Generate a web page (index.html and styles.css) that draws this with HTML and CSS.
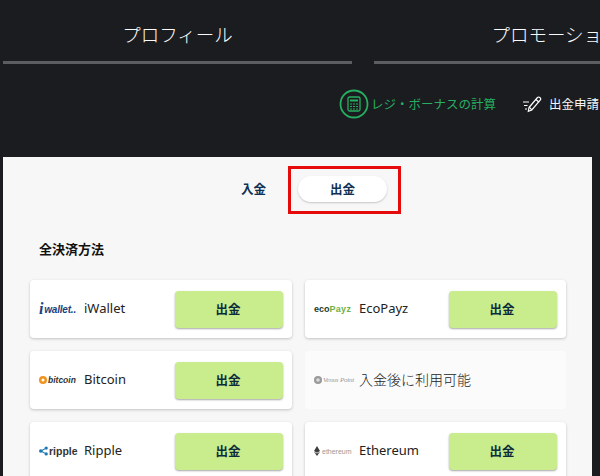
FILE: index.html
```html
<!DOCTYPE html>
<html lang="ja">
<head>
  <meta charset="UTF-8">
  <meta name="viewport" content="width=device-width, initial-scale=1.0">
  <title>出金</title>
  <link rel="stylesheet" href="styles.css">
</head>
<body>

<nav class="tabs">
  <a class="tab tab-profile">プロフィール</a>
  <a class="tab tab-promo">プロモーション</a>
</nav>

<div class="tools">
  <a class="tool tool-calc">
    <svg class="calc-icon" width="30" height="30" viewBox="0 0 30 30" fill="none" stroke="#27ae60">
      <circle cx="15" cy="15" r="13.5" stroke-width="1.8"/>
      <rect x="9" y="8" width="12" height="14" rx="1.5" stroke-width="1.3"/>
      <path d="M11 11.5h8" stroke-width="2"/>
      <path d="M11 15h8M11 17.5h8M11 20h8" stroke-width="1.2" stroke-dasharray="2 1"/>
    </svg>
    レジ・ボーナスの計算
  </a>
  <a class="tool tool-withdraw">
    <svg width="20" height="18" viewBox="0 0 20 18" fill="none" stroke="#fff" stroke-width="1.2">
      <path d="M7 12.5 15.5 2.5a1.6 1.6 0 0 1 2.3 0l.4.4a1.6 1.6 0 0 1 0 2.2L9.8 15 6.3 16.4z"/>
      <path d="M14 4.5l3 2.8M7.4 12.3l2.4 2.6"/>
      <path d="M1 7h6M2 10.500h3.500M3 14h2"/>
    </svg>
    出金申請
  </a>
</div>

<main class="panel">
  <div class="switch">
    <a class="switch-item">入金</a>
    <a class="switch-item is-active">出金</a>
  </div>

  <h2 class="section-title">全決済方法</h2>

  <div class="methods">
    <div class="method">
      <span class="logo logo-iwallet"><b>i</b><span>wallet..</span></span>
      <span class="method-name">iWallet</span>
      <button class="withdraw-btn">出金</button>
    </div>
    <div class="method">
      <span class="logo logo-ecopayz"><b>eco</b><span>Payz</span></span>
      <span class="method-name">EcoPayz</span>
      <button class="withdraw-btn">出金</button>
    </div>
    <div class="method">
      <span class="logo logo-bitcoin">
        <svg width="8" height="8" viewBox="0 0 9 9"><circle cx="4.500" cy="4.500" r="4.500" fill="#f0931f"/><circle cx="4.500" cy="4.500" r="1.700" fill="#fff"/></svg>
        <span>bitcoin</span>
      </span>
      <span class="method-name">Bitcoin</span>
      <button class="withdraw-btn">出金</button>
    </div>
    <div class="method is-locked">
      <span class="logo logo-venus">
        <svg width="8" height="8" viewBox="0 0 9 9"><circle cx="4.500" cy="4.500" r="4.500" fill="#9a9a9a"/><circle cx="4.500" cy="4.500" r="2" fill="#ddd"/></svg>
        <span>Venus Point</span>
      </span>
      <span class="method-name locked-name">入金後に利用可能</span>
    </div>
    <div class="method">
      <span class="logo logo-ripple">
        <svg width="9" height="10" viewBox="0 0 10 10" fill="#1f78b4"><circle cx="2" cy="5" r="2"/><circle cx="8" cy="1.800" r="1.800"/><circle cx="8" cy="8.200" r="1.800"/><path d="M2 5 8 1.800M2 5l6 3.200" stroke="#1f78b4" stroke-width="1.200"/></svg>
        <span>ripple</span>
      </span>
      <span class="method-name">Ripple</span>
      <button class="withdraw-btn">出金</button>
    </div>
    <div class="method">
      <span class="logo logo-ethereum">
        <svg width="6" height="10" viewBox="0 0 6 10" fill="#3c3c3d"><path d="M3 0 6 5 3 6.700 0 5zM0 5.800 3 7.500 6 5.800 3 10z"/></svg>
        <span>ethereum</span>
      </span>
      <span class="method-name">Ethereum</span>
      <button class="withdraw-btn">出金</button>
    </div>
  </div>
</main>

</body>
</html>
```

FILE: styles.css
```css
html, body {
  height: 476px;
  overflow: hidden;
}
body {
  margin: 0;
  background-color: #1a1c20;
  font-family: 'Noto Sans CJK JP', 'Noto Sans', sans-serif;
}
a {
  text-decoration: none;
}

/* top tabs */
.tabs {
  display: flex;
  gap: 22px;
  padding-left: 3px;
  width: 800px;
}
.tab {
  box-sizing: border-box;
  height: 64px;
  padding-top: 21px;
  border-bottom: 3px solid #5c5d60;
  color: #fafafa;
  font-size: 18.500px;
  font-weight: 300;
  line-height: 27px;
  text-align: center;
}
.tab-profile {
  width: 349px;
}
.tab-promo {
  width: 364px;
}

/* tool links */
.tools {
  display: flex;
  align-items: center;
  box-sizing: border-box;
  height: 93px;
  padding: 0 0 14px 339px;
}
.tool {
  display: flex;
  align-items: center;
  font-size: 12.500px;
  white-space: nowrap;
}
.tool-calc {
  color: #27ae60;
  gap: 2px;
}
.tool-withdraw {
  color: #f5f5f5;
  gap: 7px;
  margin-left: 26px;
}

/* main panel */
.panel {
  box-sizing: border-box;
  width: 589px;
  height: 319px;
  margin-left: 3px;
  padding: 19px 26px 0 27px;
  background-color: #f7f7f7;
}
.switch {
  display: flex;
  align-items: center;
  height: 26px;
  padding-left: 211px;
}
.switch-item {
  position: relative;
  color: #0f2f55;
  font-size: 12.500px;
  font-weight: 700;
  line-height: 26px;
}
.switch-item.is-active {
  width: 89px;
  margin-left: 32px;
  background-color: #fff;
  border-radius: 13px;
  box-shadow: 0 1px 2px rgba(0, 0, 0, 0.2);
  text-align: center;
}
/* red annotation box round the active item */
.switch-item.is-active::after {
  content: "";
  position: absolute;
  top: -10px;
  right: -14px;
  bottom: -12px;
  left: -10px;
  border: 3px solid #e60b0b;
}
.section-title {
  margin: 37px 0 0 9px;
  color: #111;
  font-size: 13px;
  font-weight: 700;
  line-height: 20px;
}
.methods {
  display: grid;
  grid-template-columns: 262px 261px;
  grid-auto-rows: 58px;
  column-gap: 13px;
  row-gap: 13px;
  margin-top: 21px;
}
.method {
  display: flex;
  align-items: center;
  padding: 0 9px;
  background-color: #fff;
  border-radius: 4px;
  box-shadow: 0 1px 3px rgba(0, 0, 0, 0.22);
}
.method.is-locked {
  background-color: #fbfbfb;
  box-shadow: none;
}
.logo {
  display: flex;
  align-items: center;
  gap: 1px;
  width: 45px;
  flex: none;
  font-family: 'Liberation Sans', sans-serif;
  white-space: nowrap;
}
.method-name {
  padding-bottom: 2px;
  color: #222;
  font-family: 'Noto Sans', 'Noto Sans CJK JP', sans-serif;
  font-size: 13px;
  flex: 1;
}
.locked-name {
  color: #222;
  font-family: 'Noto Sans CJK JP', sans-serif;
  font-size: 14px;
  font-weight: 300;
}
.withdraw-btn {
  width: 108px;
  height: 37px;
  padding: 0 2px 2px 0;
  border: none;
  border-radius: 4px;
  background-color: #c9ec8c;
  box-shadow: 0 1px 2px rgba(0, 0, 0, 0.35);
  color: #0d2c3a;
  font-family: inherit;
  font-size: 12.500px;
  font-weight: 700;
}

/* small payment logos */
.logo-iwallet {
  color: #1c3f7c;
  font-size: 10px;
  font-style: italic;
  font-weight: 700;
  letter-spacing: -0.2px;
}
.logo-iwallet b {
  font-size: 16px;
  font-family: 'Liberation Serif', serif;
}
.logo-ecopayz {
  gap: 0;
  font-size: 9px;
  font-weight: 700;
}
.logo-ecopayz b {
  color: #1d3b2a;
}
.logo-ecopayz span {
  color: #6fb144;
  letter-spacing: 0.3px;
}
.logo-bitcoin {
  color: #333;
  font-size: 8.500px;
  font-style: italic;
  font-weight: 700;
}
.logo-venus {
  color: #9a9a9a;
  font-family: 'Liberation Serif', serif;
  font-size: 7px;
  font-style: italic;
  letter-spacing: -0.2px;
}
.logo-ripple {
  color: #333;
  font-size: 10.500px;
  font-weight: 700;
}
.logo-ethereum {
  color: #999;
  gap: 2px;
  font-size: 7px;
}
```
